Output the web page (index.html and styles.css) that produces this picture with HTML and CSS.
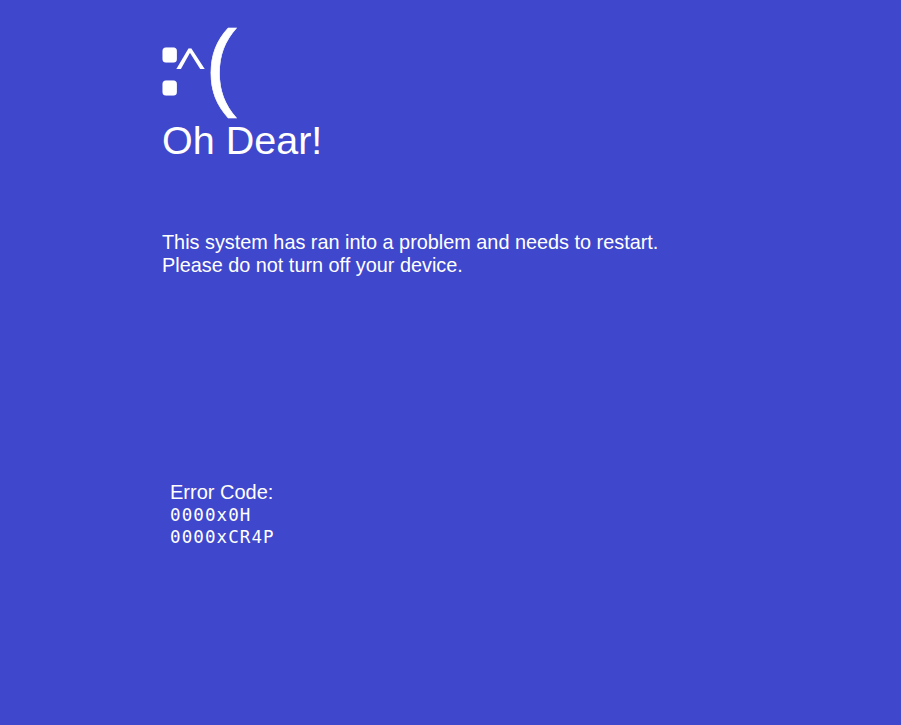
FILE: index.html
```html
<!DOCTYPE html>
<html lang="en">
<head>
<meta charset="utf-8">
<title>Oh Dear!</title>
<link rel="stylesheet" href="styles.css">
</head>
<body>
<main class="screen">
  <svg class="face" width="100" height="96" viewBox="0 0 100 96" role="img" aria-label="sad face">
    <text class="face-colon" x="6.9" y="78">:</text>
    <text class="face-caret" transform="translate(22.2 67.1) scale(0.95 0.77)" x="0" y="0">^</text>
    <text class="face-paren" x="53" y="84">(</text>
  </svg>
  <h1 class="title">Oh Dear!</h1>
  <p class="message">This system has ran into a problem and needs to restart.<br>Please do not turn off your device.</p>
  <div class="error">
    <div class="error-label">Error Code:</div>
    <div class="error-code">0000x0H</div>
    <div class="error-code">0000xCR4P</div>
  </div>
</main>
</body>
</html>
```
FILE: styles.css
```css
html, body {
  margin: 0;
  padding: 0;
  height: 100%;
}

body {
  background: #3f48cc;
  color: #ffffff;
  font-family: "Liberation Sans", Arial, sans-serif;
}

.screen {
  padding: 14px 0 0 162px;
}

.face {
  display: block;
  overflow: visible;
  margin-left: -10px;
}

.face text {
  fill: #ffffff;
}

.face-colon {
  font-family: "Liberation Sans", Arial, sans-serif;
  font-size: 77px;
  stroke: #ffffff;
  stroke-width: 7px;
  stroke-linejoin: round;
}

.face-caret {
  font-family: "Noto Sans", sans-serif;
  font-size: 60px;
}

.face-paren {
  font-family: "Liberation Sans", Arial, sans-serif;
  font-size: 96px;
  stroke: #ffffff;
  stroke-width: 0.6px;
}

.title {
  margin: 7px 0 0;
  font-size: 39.5px;
  font-weight: 400;
  line-height: 46px;
}

.message {
  margin: 68px 0 0;
  font-size: 19.85px;
  line-height: 23px;
}

.error {
  margin: 204px 0 0 8px;
}

.error-label {
  font-size: 20px;
  line-height: 23px;
}

.error-code {
  font-family: "DejaVu Sans Mono", "Liberation Mono", monospace;
  font-size: 17.5px;
  line-height: 22px;
  letter-spacing: 1.1px;
}
```
